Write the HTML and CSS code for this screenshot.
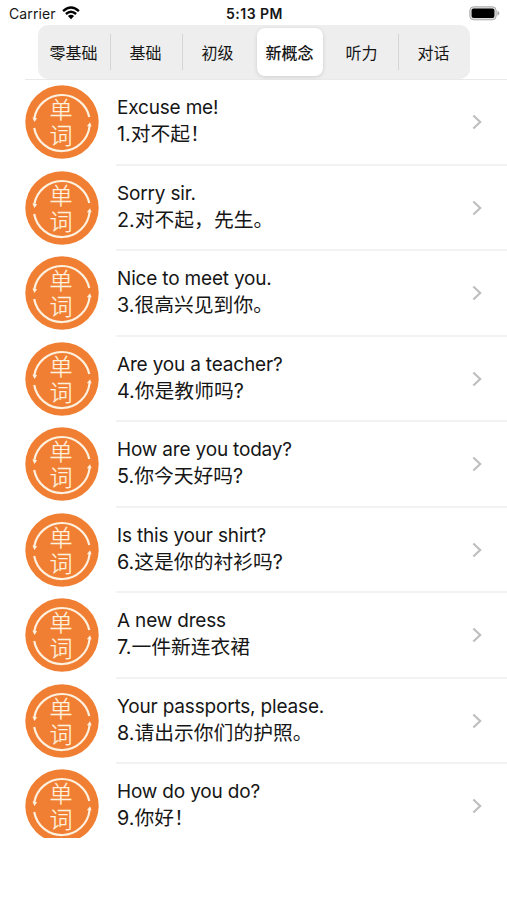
FILE: index.html
```
<!DOCTYPE html>
<html lang="zh-CN">
<head>
<meta charset="utf-8">
<title>新概念</title>
<link rel="stylesheet" href="styles.css">
</head>
<body>
<header class="status">
  <div class="carrier"><span>Carrier</span>
    <svg class="wifi" width="18" height="14" viewBox="0 0 18 14"><path d="M1.1 5.2Q9-2 16.9 5.2M3.9 8Q9 3.4 14.1 8" fill="none" stroke="#000" stroke-width="2.4"/><path d="M5.9 10Q9 7.4 12.1 10L9 13.3Z"/></svg>
  </div>
  <div class="time">5:13 PM</div>
  <svg class="battery" width="31" height="15" viewBox="0 0 31 15"><rect x=".8" y=".8" width="26.4" height="13" rx="3.8" fill="#ddd" stroke="#aaa" stroke-width="1"/><rect x="2.6" y="2.6" width="22.8" height="9.4" rx="2"/><path d="M28.4 4.8Q30.4 5.6 30.4 7.3T28.4 9.8Z" fill="#aaa"/></svg>
</header>
<nav class="tabs">
  <span class="tab">零基础</span><span class="tab line">基础</span><span class="tab line">初级</span><span class="tab active">新概念</span><span class="tab">听力</span><span class="tab line">对话</span>
</nav>
<main class="list" id="list"></main>
<template id="row">
  <article class="row">
    <svg class="badge" width="74" height="74" viewBox="0 0 74 74">
      <circle cx="37" cy="37" r="36.7" fill="#f07f34"/>
      <g fill="none" stroke="#fff1df" stroke-width="2.2"><path d="M9.4 33A28 28 0 0 1 64.3 32"/><path d="M9.2 43A28 28 0 0 0 64.6 41"/></g>
      <path d="M7.4 32.5L12.2 33.2L9.4 37ZM61.8 41.2L66.6 41.2L65 37.2Z" fill="#fff1df"/>
      <text class="glyph"><tspan x="36" y="33.4">单</tspan><tspan x="36" y="58.8">词</tspan></text>
    </svg>
    <div class="body">
      <div class="text"><p class="en"></p><p class="zh"></p></div>
      <svg class="chevron" width="10" height="16" viewBox="0 0 10 16"><path d="M1.3 1.5L8.2 8L1.3 14.5" fill="none" stroke="#bfbfc1" stroke-width="2.2"/></svg>
    </div>
  </article>
</template>
<script src="script.js"></script>
</body>
</html>
```

FILE: script.js
```
const lessons = [
  ["Excuse me!", "1.对不起！"],
  ["Sorry sir.", "2.对不起，先生。"],
  ["Nice to meet you.", "3.很高兴见到你。"],
  ["Are you a teacher?", "4.你是教师吗?"],
  ["How are you today?", "5.你今天好吗?"],
  ["Is this your shirt?", "6.这是你的衬衫吗?"],
  ["A new dress", "7.一件新连衣裙"],
  ["Your passports, please.", "8.请出示你们的护照。"],
  ["How do you do?", "9.你好！"]
];
const list = document.getElementById("list");
const template = document.getElementById("row");
for (const [en, zh] of lessons) {
  const row = template.content.cloneNode(true);
  row.querySelector(".en").textContent = en;
  row.querySelector(".zh").textContent = zh;
  list.append(row);
}
```

FILE: styles.css
```
* { box-sizing: border-box; }
body {
  margin: 0;
  height: 900px;
  overflow: hidden;
  background: #fff;
  color: #161616;
  font-family: Inter, "Noto Sans CJK SC", sans-serif;
}
.status {
  height: 25px;
  padding: 2px 7px 0 9px;
  display: grid;
  grid-template-columns: 1fr auto 1fr;
  align-items: center;
}
.carrier { display: flex; align-items: center; gap: 6px; font-size: 14px; letter-spacing: 0.1px; }
.wifi { margin-top: -2px; }
.time { font-size: 14px; font-weight: 600; letter-spacing: 0.5px; }
.battery { justify-self: end; }
.tabs {
  width: 432px;
  height: 54px;
  margin-left: 38px;
  padding: 3px 0;
  display: grid;
  grid-template-columns: repeat(6, 1fr);
  border-radius: 10px;
  background: #eee;
  font-size: 16px;
}
.tab {
  display: flex;
  align-items: center;
  justify-content: center;
  padding: 0 1px 1px 0;
  font-weight: 400;
}
.tab.line { background: linear-gradient(#d5d5d5, #d5d5d5) 0 50% / 1px 36px no-repeat; }
.tab.active {
  margin: 0 3px;
  border-radius: 8px;
  background: #fff;
  box-shadow: 0 1px 4px #0002;
  font-weight: 500;
}
.list {
  height: 759px;
  margin-left: 25px;
  overflow: hidden;
  border-top: 1px solid #e9e9e9;
}
.row { height: 85.5px; display: flex; }
.badge { margin-top: 5px; flex: none; }
.glyph {
  fill: #fff1df;
  stroke: #fff1df;
  stroke-width: 0.25px;
  font-size: 23px;
  font-weight: 300;
  text-anchor: middle;
}
.body {
  flex: 1;
  margin-left: 17px;
  padding: 1px 25px 0 1px;
  display: flex;
  align-items: center;
  justify-content: space-between;
  border-bottom: 2px solid #f2f2f2;
}
.row:last-child .body { border-color: transparent; }
.text { padding-bottom: 2px; }
.text p { margin: 0; height: 27px; line-height: 27px; white-space: nowrap; }
.en { font-size: 19px; letter-spacing: -0.18px; }
.zh { font-size: 19.8px; }
```
